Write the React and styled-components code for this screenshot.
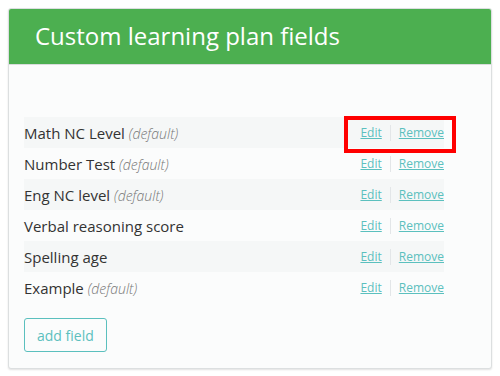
import React from "react";
import styled, { createGlobalStyle } from "styled-components";

const Global = createGlobalStyle`
  html, body { margin: 0; padding: 0; background: #fff; }
  body { padding: 8px; font-family: "Open Sans", "Noto Sans", sans-serif; }
`;

const Panel = styled.div`
  width: 484px;
  box-sizing: border-box;
  border: 1px solid #dcdfe0;
  border-radius: 3px;
  background: #fbfcfc;
  box-shadow: 0 1px 2px rgba(0,0,0,0.12);
  overflow: hidden;
`;

const Header = styled.div`
  background: #4caf50;
  height: 55px;
  display: flex;
  align-items: center;
  padding-left: 26px;
  border-bottom: 1px solid #d9dcdc;
`;

const Title = styled.h2`
  margin: 0;
  font-weight: 400;
  font-size: 24px;
  color: #fff;
  padding-bottom: 3px;
`;

const Body = styled.div`
  padding: 52px 15px 16px 15px;
`;

const Table = styled.div`
  width: 420px;
  position: relative;
`;

const Row = styled.div`
  height: 31px;
  display: flex;
  align-items: center;
  justify-content: space-between;
  background: ${p => (p.$striped ? "#f5f7f7" : "transparent")};
`;

const Name = styled.span`
  font-size: 15px;
  color: #333;
`;

const Default = styled.em`
  font-size: 14px;
  font-weight: 300;
  color: #777;
`;

const Actions = styled.div`
  display: flex;
  align-items: center;
  font-size: 12px;
`;

const ActionLink = styled.a`
  color: #5bc0be;
  text-decoration: underline;
  cursor: pointer;
`;

const Sep = styled.span`
  width: 1px;
  height: 16px;
  background: #e3e6e8;
  margin: 0 8px;
`;

const Highlight = styled.div`
  position: absolute;
  left: 320px;
  top: -1px;
  width: 112px;
  height: 37px;
  box-sizing: border-box;
  border: 4px solid #ff0000;
  pointer-events: none;
`;

const AddButton = styled.button`
  margin-top: 15px;
  font-family: inherit;
  font-size: 14px;
  color: #5bc0be;
  background: transparent;
  border: 1px solid #5bc0be;
  border-radius: 3px;
  height: 34px;
  padding: 0 12px;
`;

const fields = [
  { name: "Math NC Level", def: true },
  { name: "Number Test", def: true },
  { name: "Eng NC level", def: true },
  { name: "Verbal reasoning score", def: false },
  { name: "Spelling age", def: false },
  { name: "Example", def: true },
];

export default function App() {
  return (
    <>
      <Global />
      <Panel>
        <Header>
          <Title>Custom learning plan fields</Title>
        </Header>
        <Body>
          <Table>
            {fields.map((f, i) => (
              <Row key={f.name} $striped={i % 2 === 0}>
                <Name>
                  {f.name}
                  {f.def && <> <Default>(default)</Default></>}
                </Name>
                <Actions>
                  <ActionLink>Edit</ActionLink>
                  <Sep />
                  <ActionLink>Remove</ActionLink>
                </Actions>
              </Row>
            ))}
            <Highlight />
          </Table>
          <AddButton>add field</AddButton>
        </Body>
      </Panel>
    </>
  );
}
